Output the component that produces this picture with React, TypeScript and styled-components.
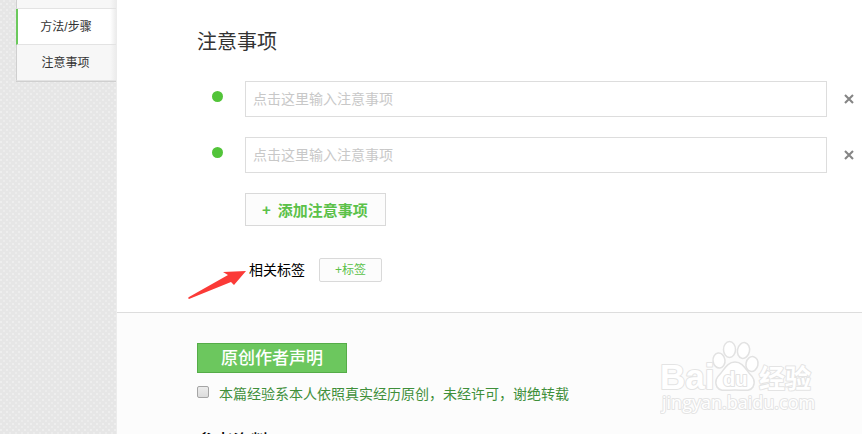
import React from "react";
import styled, { createGlobalStyle } from "styled-components";

const GlobalStyle = createGlobalStyle`
  * { box-sizing: border-box; }
  html, body { margin: 0; padding: 0; }
  body, button, input {
    font-family: "Liberation Sans", "Noto Sans CJK SC", sans-serif;
  }
`;

const Page = styled.div`
  display: flex;
  height: 100vh;
  overflow: hidden;
  background-color: #e6e6e6;
  background-image:
    radial-gradient(circle at 1px 4px, #eeeeee 1px, transparent 1px),
    radial-gradient(circle at 4px 1px, #ececec 1px, transparent 1px);
  background-size: 6px 6px;
`;

const Sidebar = styled.aside`
  flex: 0 0 117px;
  padding-left: 16px;
  border-right: 1px solid #ececec;
`;

const Nav = styled.nav`
  display: flex;
  flex-direction: column;
  border-bottom: 1px solid #cfcfcf;
`;

const NavLink = styled.a<{ $active?: boolean }>`
  height: 36px;
  padding-right: 2px;
  border-left: ${(p) => (p.$active ? "2px solid #6bc95c" : "1px solid #cfcfcf")};
  border-bottom: 1px solid #e3e3e3;
  background: linear-gradient(to left, #ececec, ${(p) => (p.$active ? "#fff" : "#f7f7f7")} 6px);
  color: #333;
  font-size: 12px;
  line-height: 37px;
  text-align: center;
  text-decoration: none;
`;

const NavEdge = styled.div`
  height: 9px;
  border-left: 1px solid #cfcfcf;
  border-bottom: 1px solid #e3e3e3;
  background: linear-gradient(to left, #ececec, #f7f7f7 6px);
`;

const Main = styled.main`
  flex: 1;
  min-width: 0;
  background: #fff;
`;

const Notes = styled.section`
  padding: 27px 0 30px 80px;
`;

const Heading = styled.h2`
  margin: 0;
  color: #333;
  font-size: 20px;
  font-weight: 400;
  line-height: 30px;
`;

const Subheading = styled.h3`
  margin: 0;
  color: #000;
  font-size: 18px;
  font-weight: 500;
  line-height: 30px;
`;

const NoteList = styled.ul`
  display: flex;
  flex-direction: column;
  gap: 20px;
  margin: 24px 0 20px;
  padding: 0 0 0 15px;
  list-style: none;
`;

const NoteRow = styled.li`
  display: flex;
  align-items: center;
`;

const Bullet = styled.span`
  width: 11px;
  height: 11px;
  margin: 0 22px 6px 0;
  border-radius: 50%;
  background: #52c439;
`;

const NoteInput = styled.input`
  flex: 1;
  min-width: 0;
  height: 36px;
  padding: 0 7px;
  border: 1px solid #ddd;
  border-radius: 0;
  background: #fff;
  color: #333;
  font-size: 14px;
  &::placeholder { color: #c8c8c8; opacity: 1; }
`;

const RemoveButton = styled.button`
  display: flex;
  align-items: center;
  justify-content: flex-end;
  width: 35px;
  height: 36px;
  padding: 0 8px 0 0;
  border: 0;
  background: none;
`;

const Actions = styled.div`
  display: flex;
  flex-direction: column;
  align-items: flex-start;
  gap: 32px;
  padding-left: 48px;
`;

const AddButton = styled.button`
  display: flex;
  align-items: center;
  gap: 7px;
  height: 33px;
  padding: 0 17px 0 16px;
  border: 1px solid #d9d9d9;
  background: #fcfcfc;
  color: #5bc149;
  font-size: 15px;
  font-weight: 700;
`;

const TagRow = styled.div`
  display: flex;
  align-items: center;
  gap: 14px;
  padding-left: 4px;
  color: #000;
  font-size: 14px;
  line-height: 20px;
`;

const TagButton = styled.button`
  width: 63px;
  height: 24px;
  padding: 0;
  border: 1px solid #d9d9d9;
  border-radius: 2px;
  background: #fcfcfc;
  color: #5bc149;
  font-size: 12px;
  line-height: 20px;
`;

const ArrowLayer = styled.svg`
  position: absolute;
  right: 100%;
  top: 0;
`;

const TagLabel = styled.span`
  position: relative;
`;

const Declaration = styled.section`
  position: relative;
  height: 160px;
  padding: 30px 0 0 80px;
  border-top: 1px solid #ddd;
  background: #fcfcfc;
`;

const Badge = styled.h3`
  width: 150px;
  height: 30px;
  margin: 0;
  border: 1px solid #55ac48;
  background: #6cc75e;
  color: #fff;
  font-size: 17px;
  font-weight: 500;
  line-height: 30px;
  text-align: center;
`;

const Agreement = styled.label`
  display: flex;
  align-items: center;
  gap: 10px;
  margin: 11px 0 23px;
  color: #3f8f3a;
  font-size: 14px;
  line-height: 20px;
`;

const Checkbox = styled.input`
  appearance: none;
  width: 12px;
  height: 12px;
  margin: 0 0 4px;
  border: 1px solid #a5a5a5;
  border-radius: 2px;
  background: linear-gradient(#ececec, #dcdcdc);
`;

const Watermark = styled.svg`
  position: absolute;
  top: 27px;
  right: 44px;
  text { paint-order: stroke; stroke-linejoin: round; }
`;

function Cross() {
  return (
    <svg width="10" height="10" viewBox="0 0 10 10" aria-hidden="true">
      <path d="M1 1 9 9M9 1 1 9" stroke="#858585" strokeWidth="2.1" />
    </svg>
  );
}

function BrandMark() {
  return (
    <Watermark width="158" height="78" viewBox="0 0 158 78" role="img" aria-label="Baidu 经验">
      <g fill="#fff" stroke="#e4e4e4" strokeWidth="2">
        <text x="0" y="49" fontFamily="Liberation Sans" fontWeight="700" fontSize="35">Bai</text>
        <text x="99" y="48" fontFamily="Noto Sans CJK SC" fontWeight="700" fontSize="26">经验</text>
        <text x="2" y="69" fontFamily="Open Sans" fontSize="18">jingyan.baidu.com</text>
      </g>
      <g fill="#fff" stroke="#e2e2e2" strokeWidth="1.5">
        <ellipse cx="59" cy="20.5" rx="6" ry="7.5" transform="rotate(-8 59 20.5)" />
        <ellipse cx="69.5" cy="9.5" rx="6" ry="8" />
        <ellipse cx="83.5" cy="10.5" rx="6" ry="8" transform="rotate(12 83.5 10.5)" />
        <ellipse cx="92" cy="24" rx="6" ry="7.5" transform="rotate(12 92 24)" />
        <path d="M75 22C82 22 85 28 89 33C93 37 96 41 93 47C90 52 83 50 75 50C67 50 60 52 57 47C54 41 57 37 61 33C65 28 68 22 75 22Z" />
        <text x="63" y="46" fontFamily="Liberation Sans" fontWeight="700" fontSize="20" strokeWidth="2">du</text>
      </g>
    </Watermark>
  );
}

export default function App() {
  return (
    <>
      <GlobalStyle />
      <Page>
        <Sidebar>
          <Nav>
            <NavEdge />
            <NavLink href="#steps" $active>方法/步骤</NavLink>
            <NavLink href="#notes">注意事项</NavLink>
          </Nav>
        </Sidebar>
        <Main>
          <Notes id="notes">
            <Heading>注意事项</Heading>
            <NoteList>
              {[1, 2].map((n) => (
                <NoteRow key={n}>
                  <Bullet />
                  <NoteInput aria-label={`注意事项 ${n}`} placeholder="点击这里输入注意事项" />
                  <RemoveButton type="button" aria-label="删除"><Cross /></RemoveButton>
                </NoteRow>
              ))}
            </NoteList>
            <Actions>
              <AddButton type="button"><span>+</span>添加注意事项</AddButton>
              <TagRow>
                <TagLabel>
                  相关标签
                  <ArrowLayer width="64" height="44" viewBox="0 0 64 44" aria-hidden="true">
                    <path d="M3 38 4 37 43 15 38 12 61 11 49 25 46 22 4 39Z" fill="#fb3a37" />
                  </ArrowLayer>
                </TagLabel>
                <TagButton type="button">+标签</TagButton>
              </TagRow>
            </Actions>
          </Notes>
          <Declaration>
            <Badge>原创作者声明</Badge>
            <Agreement>
              <Checkbox type="checkbox" />
              本篇经验系本人依照真实经历原创，未经许可，谢绝转载
            </Agreement>
            <Subheading>参考资料</Subheading>
            <BrandMark />
          </Declaration>
        </Main>
      </Page>
    </>
  );
}
